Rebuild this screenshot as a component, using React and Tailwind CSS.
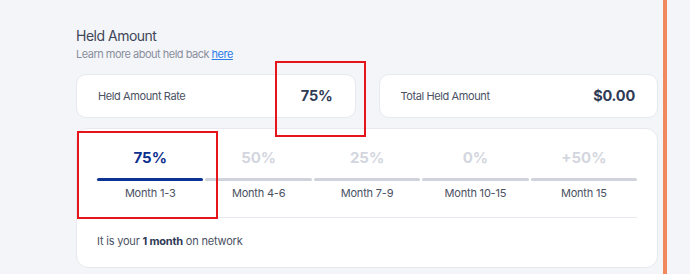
import React from 'react';

const tiers = [
  { rate: '75%', label: 'Month 1-3', active: true },
  { rate: '50%', label: 'Month 4-6' },
  { rate: '25%', label: 'Month 7-9' },
  { rate: '0%', label: 'Month 10-15' },
  { rate: '+50%', label: 'Month 15' },
];

function StatCard({ title, value }) {
  return (
    <div className="flex h-[44px] flex-1 items-center justify-between rounded-[10px] border border-[#e8e9ee] bg-white pl-[21px] pr-[22px]">
      <span className="text-[11px] tracking-[-0.4px] text-[#4a5163]">{title}</span>
      <span className="text-[14.5px] font-bold tracking-[-0.2px] text-[#2f3a55]">{value}</span>
    </div>
  );
}

export default function App() {
  return (
    <div className="flex h-[274px] w-[690px] bg-[#f4f5f9] font-['Inter',sans-serif]">
      <div className="w-[658px] pl-[76px] pt-[26px]">
        <h2 className="text-[14px] leading-[20px] tracking-[-0.5px] text-[#3f4658]">Held Amount</h2>
        <p className="text-[11px] leading-[16px] tracking-[-0.5px] text-[#8a8f9c]">
          Learn more about held back <a href="#" className="text-[#2b7de9] underline">here</a>
        </p>

        <div className="relative mt-[12px] flex gap-[23px]">
          <StatCard title="Held Amount Rate" value="75%" />
          <StatCard title="Total Held Amount" value="$0.00" />
          <div className="absolute left-[199px] top-[-13px] z-10 h-[76px] w-[91px] border-2 border-[#e5151b]" />
        </div>

        <div className="relative mt-[10px] rounded-[12px] border border-[#e8e9ee] bg-white px-[20px] pb-[18px] pt-[19px]">
          <div className="flex gap-[2px]">
            {tiers.map((t) => (
              <div key={t.label} className="flex flex-1 flex-col items-center">
                <span className={`text-[15px] font-bold leading-[20px] ${t.active ? 'text-[#0d2f8f]' : 'text-[#d3d6de]'}`}>{t.rate}</span>
                <div className={`mt-[10px] h-[3px] w-full rounded-full ${t.active ? 'bg-[#0d3394]' : 'bg-[#d0d3dc]'}`} />
                <span className="mt-[4px] text-[11px] leading-[16px] tracking-[-0.2px] text-[#4a5163]">{t.label}</span>
              </div>
            ))}
          </div>
          <div className="mt-[16px] h-px bg-[#e8e9ee]" />
          <p className="mt-[15px] text-[11px] leading-[16px] tracking-[-0.2px] text-[#4a5163]">
            It is your <b className="font-bold text-[#2f3a55]">1 month</b> on network
          </p>
          <div className="absolute left-[0px] top-[2px] z-10 h-[88px] w-[141px] border-2 border-[#e5151b]" />
        </div>
      </div>
      <div className="ml-[5px] h-full w-[4px] bg-[#f0895e]" />
    </div>
  );
}
